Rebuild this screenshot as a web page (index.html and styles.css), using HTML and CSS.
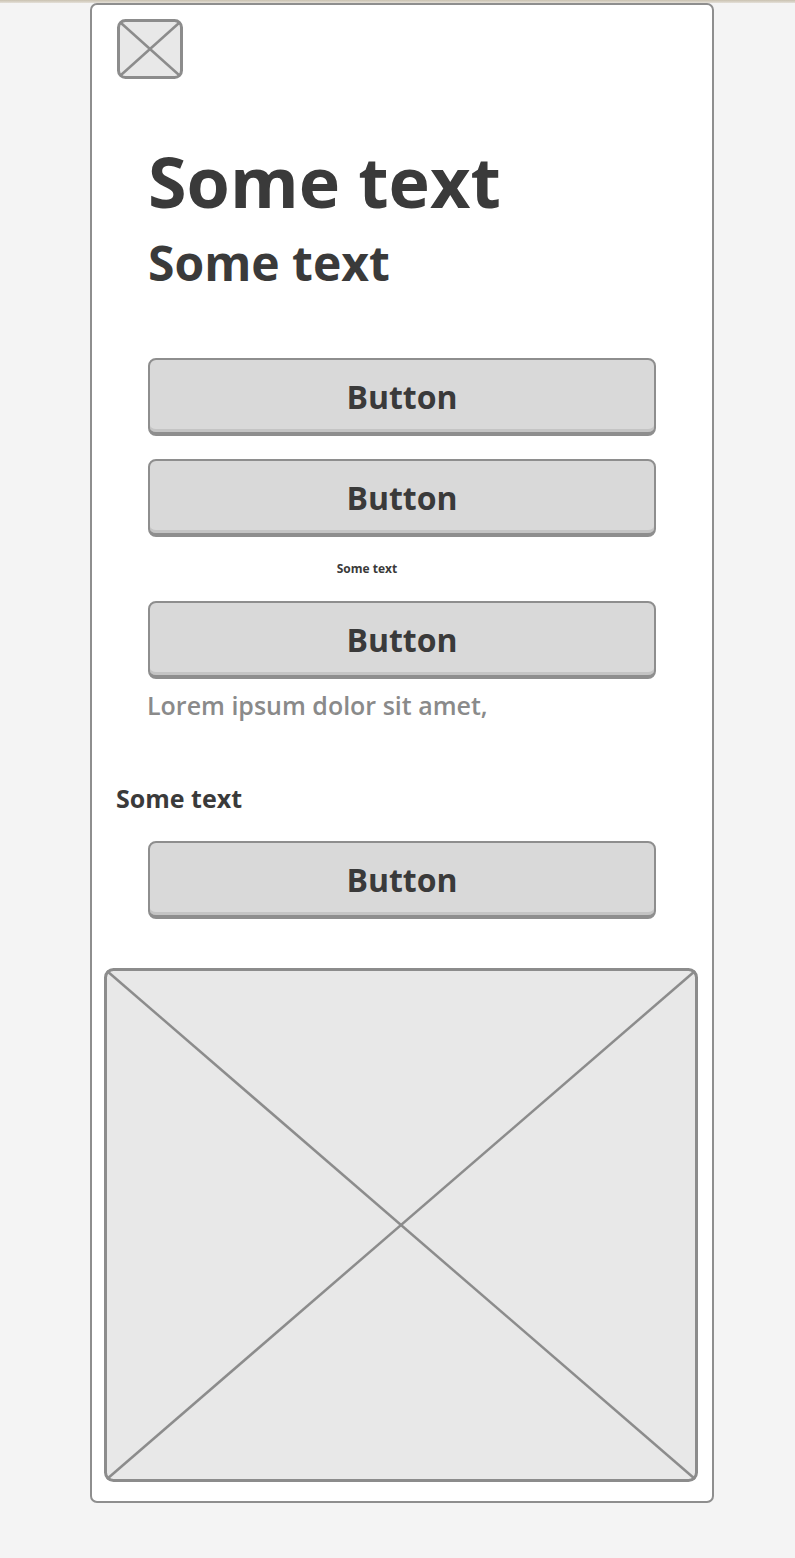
FILE: index.html
```html
<!DOCTYPE html>
<html lang="en">
<head>
    <meta charset="UTF-8">
    <meta name="viewport" content="width=device-width, initial-scale=1.0">
    <title>Wireframe</title>
    <link rel="stylesheet" href="styles.css">
</head>
<body>

    <!-- Top strip -->
    <div class="top-strip"></div>

    <!-- Phone card -->
    <div class="card">
        <svg class="icon" width="66" height="60" viewBox="0 0 66 60">
            <rect x="1.5" y="1.5" width="63" height="57" rx="7" fill="#e8e8e8" stroke="#8c8c8c" stroke-width="3"/>
            <line x1="4" y1="4" x2="62" y2="56" stroke="#8c8c8c" stroke-width="2.5"/>
            <line x1="62" y1="4" x2="4" y2="56" stroke="#8c8c8c" stroke-width="2.5"/>
        </svg>

        <h1 class="title">Some text</h1>
        <h2 class="subtitle">Some text</h2>

        <button class="btn first">Button</button>
        <button class="btn">Button</button>

        <p class="tiny">Some text</p>

        <button class="btn">Button</button>

        <p class="lorem">Lorem ipsum dolor sit amet,</p>

        <p class="label">Some text</p>

        <button class="btn">Button</button>

        <svg class="picture" width="594" height="514" viewBox="0 0 594 514">
            <rect x="1.5" y="1.5" width="591" height="511" rx="8" fill="#e8e8e8" stroke="#8c8c8c" stroke-width="3"/>
            <line x1="3" y1="3" x2="591" y2="511" stroke="#8c8c8c" stroke-width="2.5"/>
            <line x1="591" y1="3" x2="3" y2="511" stroke="#8c8c8c" stroke-width="2.5"/>
        </svg>
    </div>

</body>
</html>
```

FILE: styles.css
```css
/* General Styles */
body {
    font-family: 'Open Sans', 'Noto Sans', sans-serif;
    margin: 0;
    padding: 0;
    background-color: #f4f4f4;
    color: #3a3a3a;
}

.top-strip {
    height: 3px;
    background: linear-gradient(#c9c1b0, #e4e0d8);
}

/* Card */
.card {
    width: 620px;
    margin-left: 90px;
    background: #fff;
    border: 2px solid #8e8e8e;
    border-radius: 7px;
    padding-bottom: 19px;
}

.icon {
    display: block;
    margin: 14px 0 0 25px;
}

.title {
    margin: 67px 56px 0;
    font-size: 70px;
    line-height: 70px;
    font-weight: 700;
}

.subtitle {
    margin: 23px 56px 0;
    font-size: 48px;
    line-height: 48px;
    font-weight: 700;
}

/* Buttons */
.btn {
    display: block;
    width: 508px;
    height: 78px;
    margin: 23px 56px 0;
    font-family: inherit;
    font-size: 32px;
    font-weight: 700;
    color: #3a3a3a;
    background: #d9d9d9;
    border: 2px solid #8e8e8e;
    border-bottom-width: 4px;
    border-radius: 8px;
    box-shadow: inset 0 -3px 0 #c4c4c4;
}

.btn.first {
    margin-top: 71px;
}

.tiny {
    margin: 0;
    height: 64px;
    line-height: 64px;
    font-size: 12px;
    font-weight: 700;
    text-align: center;
    padding-right: 70px;
}

.tiny + .btn {
    margin-top: 0;
}

.lorem {
    margin: 0 0 0 55px;
    line-height: 52px;
    font-size: 25px;
    font-weight: 600;
    color: #8a8a8a;
}

.label {
    margin: 47px 0 0 24px;
    line-height: 40px;
    font-size: 25px;
    font-weight: 700;
}

.picture {
    display: block;
    margin: 49px 0 0 12px;
}
```
